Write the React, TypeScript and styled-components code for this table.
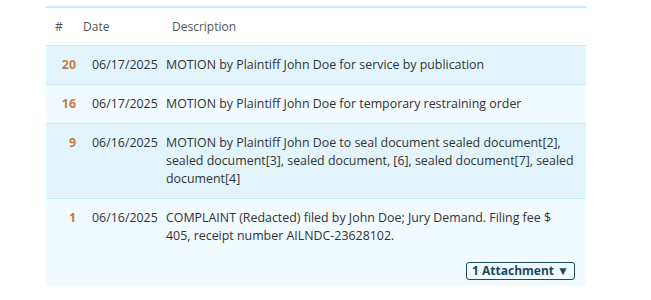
import React from 'react';
import styled, { createGlobalStyle } from 'styled-components';

const GlobalStyle = createGlobalStyle`
  body {
    margin: 0;
    background: #fff;
    font-family: 'Open Sans', 'Noto Sans', Arial, sans-serif;
    color: #333;
  }
`;

const SPage = styled.div`
  padding: 6px 65px 0 46px;
`;

const STable = styled.div`
  width: 540px;
  border-top: 2px solid #c6ecfb;
`;

const SHeader = styled.div`
  display: grid;
  grid-template-columns: 37px 89px 1fr;
  align-items: center;
  height: 37px;
  border-bottom: 1px solid #bfe9fa;
  font-size: 12px;
  color: #555;
  span:first-child {
    padding-left: 9px;
  }
`;

const SRow = styled.div<{ $alt?: boolean }>`
  display: grid;
  grid-template-columns: 34px 86px 1fr;
  padding: 10px 8px 10px 0;
  background: ${(p) => (p.$alt ? '#f0faff' : '#e2f5fd')};
  border-bottom: 1px solid #c6ecfb;
  font-size: 12.4px;
  line-height: 18px;
  &:last-child {
    border-bottom: none;
    padding-bottom: 6px;
  }
`;

const SNum = styled.div`
  text-align: right;
  padding-right: 4px;
  color: #c77a45;
  font-weight: 700;
`;

const SDate = styled.div`
  padding-left: 12px;
`;

const SDesc = styled.div``;

const SActions = styled.div`
  display: flex;
  justify-content: flex-end;
  margin-top: 17px;
  padding-right: 3px;
`;

const SAttachButton = styled.button`
  font-family: inherit;
  font-size: 12px;
  font-weight: 700;
  color: #1b4a5c;
  background: transparent;
  border: 1px solid #1b4a5c;
  border-radius: 3px;
  height: 18px;
  padding: 0 5px;
  line-height: 16px;
  cursor: pointer;
`;

type Entry = { num: number; date: string; desc: string; attachments?: number };

const entries: Entry[] = [
  { num: 20, date: '06/17/2025', desc: 'MOTION by Plaintiff John Doe for service by publication' },
  { num: 16, date: '06/17/2025', desc: 'MOTION by Plaintiff John Doe for temporary restraining order' },
  {
    num: 9,
    date: '06/16/2025',
    desc: 'MOTION by Plaintiff John Doe to seal document sealed document[2], sealed document[3], sealed document, [6], sealed document[7], sealed document[4]',
  },
  {
    num: 1,
    date: '06/16/2025',
    desc: 'COMPLAINT (Redacted) filed by John Doe; Jury Demand. Filing fee $ 405, receipt number AILNDC-23628102.',
    attachments: 1,
  },
];

const App = () => {
  return (
    <SPage>
      <GlobalStyle />
      <STable>
        <SHeader>
          <span>#</span>
          <span>Date</span>
          <span>Description</span>
        </SHeader>
        {entries.map((e, i) => (
          <SRow key={e.num} $alt={i % 2 === 1}>
            <SNum>{e.num}</SNum>
            <SDate>{e.date}</SDate>
            <SDesc>
              {e.desc}
              {e.attachments ? (
                <SActions>
                  <SAttachButton>{e.attachments} Attachment ▼</SAttachButton>
                </SActions>
              ) : null}
            </SDesc>
          </SRow>
        ))}
      </STable>
    </SPage>
  );
};

export default App;
